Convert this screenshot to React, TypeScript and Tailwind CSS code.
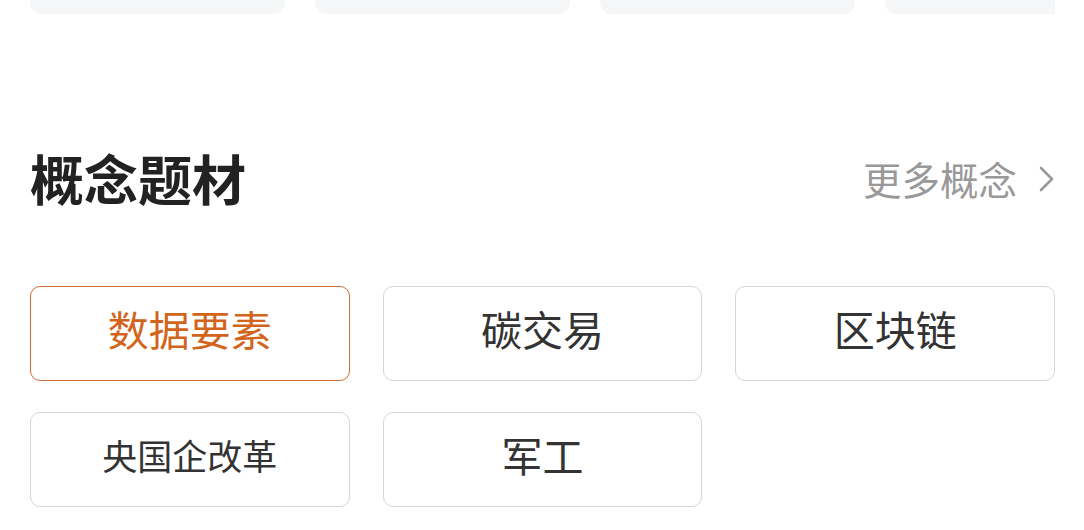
const topCards = [1, 2, 3, 4];

const concepts = [
  { id: 'data', label: '数据要素', active: true },
  { id: 'carbon', label: '碳交易' },
  { id: 'chain', label: '区块链' },
  { id: 'soe', label: '央国企改革', small: true },
  { id: 'military', label: '军工' },
];

export default function App() {
  return (
    <div className="h-[530px] w-[1084px] overflow-hidden bg-white pl-[30px] pr-[29px] font-['Noto_Sans_CJK_SC','Noto_Sans',sans-serif]">
      <div className="flex gap-[30px] overflow-hidden">
        {topCards.map((c) => (
          <div key={c} className="h-[14px] w-[255px] shrink-0 rounded-b-[12px] bg-[#f5f6f8]" />
        ))}
      </div>

      <div className="mt-[137px] flex items-center justify-between">
        <h2 className="text-[54px] leading-[54px] font-bold text-[#222]">概念题材</h2>
        <button className="flex items-center gap-[22px] text-[38.5px] leading-[40px] text-[#999]">
          更多概念
          <svg width="16" height="26" viewBox="0 0 16 26" fill="none" className="mt-[2px]">
            <path d="M2 2l11 11L2 24" stroke="#999" strokeWidth="2.6" strokeLinecap="round" strokeLinejoin="round" />
          </svg>
        </button>
      </div>

      <div className="mt-[81px] grid grid-cols-3 gap-x-[33px] gap-y-[31px]">
        {concepts.map((c) => (
          <div
            key={c.id}
            className={
              c.active
                ? 'flex h-[95px] items-center justify-center rounded-[10px] border-[1.5px] border-[#cf6e34] pb-[9px] text-[41px] text-[#d2641c]'
                : c.small
                  ? 'flex h-[95px] items-center justify-center rounded-[10px] border-[1.5px] border-[#d6d6d6] pb-[9px] text-[35px] text-[#333]'
                  : 'flex h-[95px] items-center justify-center rounded-[10px] border-[1.5px] border-[#d6d6d6] pb-[9px] text-[41px] text-[#333]'
            }
          >
            {c.label}
          </div>
        ))}
      </div>
    </div>
  );
}
